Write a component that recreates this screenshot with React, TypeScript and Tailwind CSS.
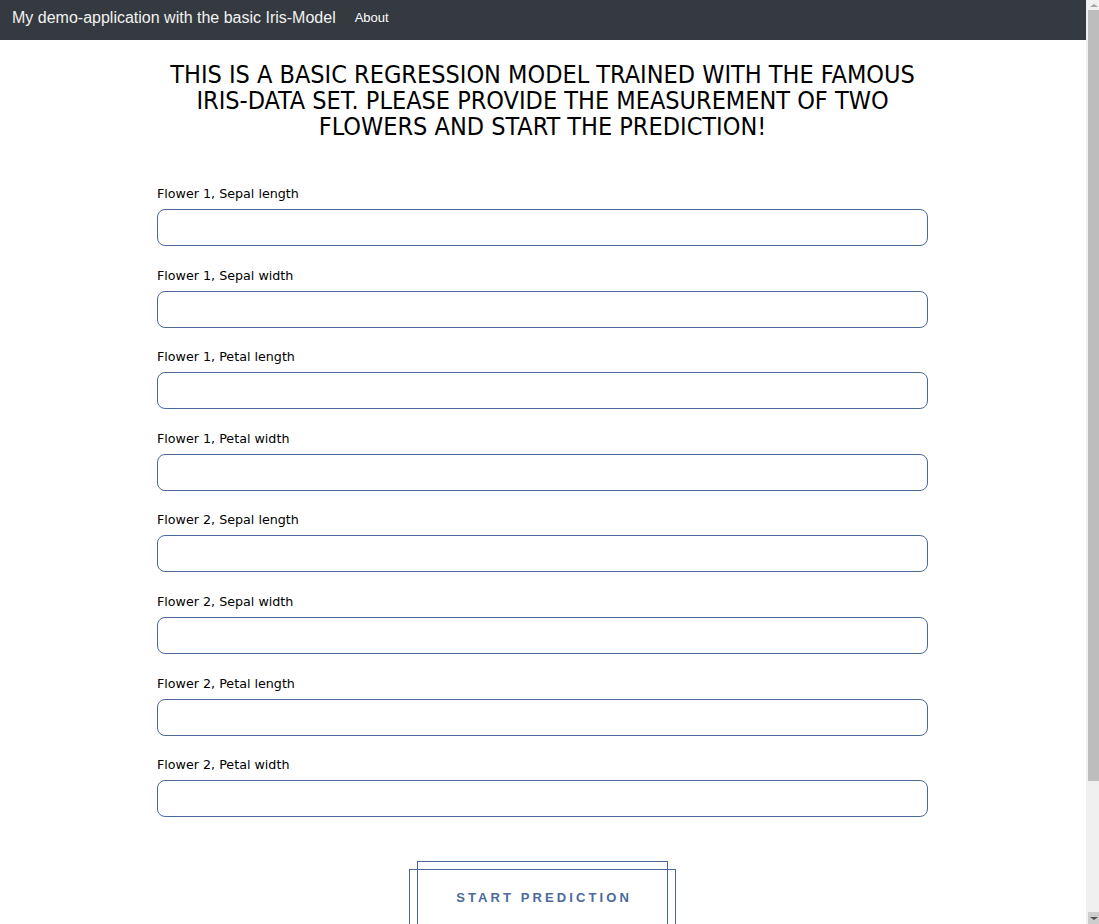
import React, { useState } from "react";

const fields = [
  "Flower 1, Sepal length",
  "Flower 1, Sepal width",
  "Flower 1, Petal length",
  "Flower 1, Petal width",
  "Flower 2, Sepal length",
  "Flower 2, Sepal width",
  "Flower 2, Petal length",
  "Flower 2, Petal width",
];

// the browser's scrollbar, drawn so the page is laid out like in the screenshot
const Scrollbar = () => (
  <div className="fixed top-0 right-0 w-[13px] h-[924px] bg-[#f0f0f0] flex flex-col">
    <div className="h-[10px] flex items-center justify-center pl-[2px]">
      <div className="w-0 h-0 border-l-[4px] border-r-[4px] border-b-[3px] border-l-transparent border-r-transparent border-b-[#a3a3a3]" />
    </div>
    <div className="ml-[2px] h-[771px] bg-[#bdbdbd]" />
    <div className="flex-1" />
    <div className="ml-[2px] h-[12px] bg-[#cdcdcd] flex items-center justify-center">
      <div className="w-0 h-0 border-l-[4px] border-r-[4px] border-t-[3px] border-l-transparent border-r-transparent border-t-[#505050]" />
    </div>
  </div>
);

const App = () => {
  const [values, setValues] = useState<string[]>(fields.map(() => ""));

  const handleSubmit = (e: React.FormEvent) => {
    e.preventDefault();
  };

  return (
    <div className="min-h-[1068px] bg-white">
      <div className="mr-[13px]">
        <nav className="h-10 bg-[#343a40] flex items-start pt-[9px] px-3 font-['Liberation_Sans',Arial,sans-serif]">
          <span className="text-[16px] leading-[18px] text-[#f2f2f2] mr-[19px]">
            My demo-application with the basic Iris-Model
          </span>
          <a className="text-[13px] leading-[18px] text-white">About</a>
        </nav>

        <div className="pr-px">
          <div className="w-[771px] mx-auto font-['DejaVu_Sans',sans-serif]">
            <h1 className="mt-[22px] text-center text-[25px] leading-[26px] text-black uppercase font-['DejaVu_Sans_Condensed','DejaVu_Sans',sans-serif] px-3">
              This is a basic regression model trained with the famous Iris-data set. Please provide the measurement of two flowers and start the prediction!
            </h1>

            <form onSubmit={handleSubmit} className="mt-[43px]">
              <div className="flex flex-col gap-[18.6px]">
                {fields.map((label, i) => (
                  <div key={label} className="flex flex-col">
                    <label className="text-[12.7px] leading-[21px] text-black mb-[5px]">{label}</label>
                    <input
                      type="number"
                      value={values[i]}
                      onChange={(e) => {
                        const next = [...values];
                        next[i] = e.target.value;
                        setValues(next);
                      }}
                      className="h-[37px] w-full rounded-lg border border-[#4b6a9b] px-3 outline-none"
                    />
                  </div>
                ))}
              </div>

              <div className="flex justify-center mt-[52px]">
                <div className="relative">
                  <div className="absolute left-[8px] right-[8px] top-[-8px] bottom-[-16px] border border-[#4b6a9b]" />
                  <button
                    type="submit"
                    className="relative w-[267px] h-[58px] border border-[#4b6a9b] pl-[3px] font-['Liberation_Sans',Arial,sans-serif] font-bold text-[13px] tracking-[3.1px] text-[#4b6a9b] uppercase"
                  >
                    Start Prediction
                  </button>
                </div>
              </div>
            </form>
          </div>
        </div>
      </div>
      <Scrollbar />
    </div>
  );
};

export default App;
